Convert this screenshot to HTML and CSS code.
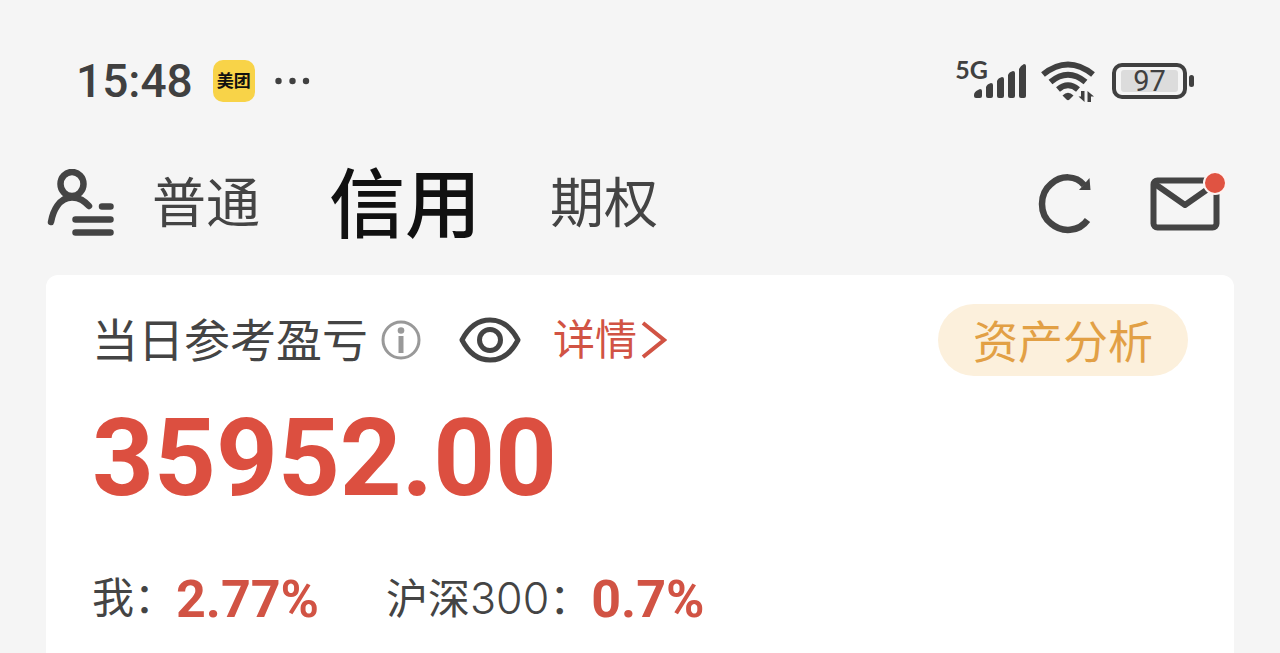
FILE: index.html
```html
<!DOCTYPE html>
<html lang="zh-CN">
<head>
<meta charset="utf-8">
<meta name="viewport" content="width=device-width, initial-scale=1">
<title>信用</title>
<link rel="stylesheet" href="styles.css">
</head>
<body>
<div class="status">
  <time class="clock">15:48</time>
  <span class="app-badge">美团</span>
  <svg class="dots" width="36" height="8" viewBox="0 0 36 8" fill="#404040" aria-hidden="true"><circle cx="3.500" cy="4" r="3.200"/><circle cx="17.500" cy="4" r="3.200"/><circle cx="31" cy="4" r="3.200"/></svg>
  <div class="status-right">
    <span class="network">5G</span>
    <svg class="signal" width="52" height="34" viewBox="0 0 52 34" fill="#404040" aria-hidden="true">
      <path d="M0 31Q0 28 4 26L6 25Q8 25 8 27V32Q8 34 6 34H2Q0 34 0 32Z"/>
      <path d="M12 23Q13 20 17 19Q19 19 19 21V32Q19 34 17 34H14Q12 34 12 32Z"/>
      <path d="M23 17Q24 14 28 13Q30 13 30 15V32Q30 34 28 34H25Q23 34 23 32Z"/>
      <path d="M34 11Q35 8 39 7Q41 7 41 9V32Q41 34 39 34H36Q34 34 34 32Z"/>
      <path d="M45 5Q46 2 50 0Q52 0 52 2V32Q52 34 50 34H47Q45 34 45 32Z"/>
    </svg>
    <svg class="wifi" width="54" height="42" viewBox="0 0 54 42" fill="none" stroke="#404040" stroke-width="6" aria-hidden="true">
      <path d="M2 14.500Q27-5.500 52 14.500M9.500 22Q27 7.500 44.500 22M17 29.500Q27 21 37 29.500"/>
      <path d="M21.500 35.500Q27 30 32.500 35.500L28.500 39.500Q27 41 25.500 39.500Z" fill="#404040" stroke="none"/>
      <path d="M43.500 31V42L37.500 36.500H40V31ZM46.500 42V31L53 36.500H50V42Z" fill="#404040" stroke="none"/>
    </svg>
    <div class="battery"><span class="battery-level">97</span></div>
  </div>
</div>

<header class="nav">
  <button class="icon-button profile" aria-label="账户">
    <svg width="68" height="70" viewBox="0 0 68 70" fill="none" stroke="#444" stroke-width="6.500" stroke-linecap="round" aria-hidden="true">
      <ellipse cx="25" cy="15" rx="11.500" ry="12"/>
      <path d="M4 53C6 42 12 28.500 25 28.500C33 28.500 37 32 42 37M55 37.500H63.500M28.500 50.500H63.500M28.500 63.500H63.500"/>
    </svg>
  </button>
  <nav class="tabs">
    <a class="tab" href="#normal">普通</a>
    <a class="tab tab-active" href="#credit" aria-current="page">信用</a>
    <a class="tab" href="#option">期权</a>
  </nav>
  <button class="icon-button refresh" aria-label="刷新">
    <svg width="56" height="60" viewBox="0 0 56 60" aria-hidden="true">
      <path d="M50.500 46C42 58 25 59 14 49.500C2 40 2 20 14 10C24 1 39 1 47 11" fill="none" stroke="#444" stroke-width="6.500"/>
      <path d="M52.500 4L53.500 16H42Z" fill="#444"/>
    </svg>
  </button>
  <button class="icon-button mail" aria-label="消息">
    <svg width="70" height="54" viewBox="0 0 70 54" fill="none" stroke="#444" stroke-width="6" aria-hidden="true">
      <rect x="3.500" y="3.500" width="63" height="47" rx="4"/>
      <path d="M5 7L35 28L65 7" stroke-linejoin="round"/>
    </svg>
    <span class="mail-dot"></span>
  </button>
</header>

<main class="card">
  <div class="heading">
    <h1 class="title">当日参考盈亏</h1>
    <button class="icon-button info" aria-label="说明">
      <svg width="40" height="40" viewBox="0 0 40 40" aria-hidden="true">
        <circle cx="20" cy="20" r="18" fill="none" stroke="#999" stroke-width="3"/>
        <circle cx="20" cy="10.500" r="3.300" fill="#999"/><path d="M17.500 16H22.500V33H17.500Z" fill="#999"/>
      </svg>
    </button>
    <button class="icon-button eye" aria-label="隐藏金额">
      <svg width="62" height="46" viewBox="0 0 62 46" fill="none" stroke="#444" stroke-width="5" aria-hidden="true">
        <path d="M3 23C10 9.500 19 3 31 3S52 9.500 59 23C52 36.500 43 43 31 43S10 36.500 3 23Z" stroke-linejoin="round"/>
        <circle cx="31" cy="23" r="10.500"/>
      </svg>
    </button>
    <a class="detail" href="#detail">详情<svg width="26" height="38" viewBox="0 0 26 38" fill="none" stroke="#d15344" stroke-width="4" aria-hidden="true"><path d="M2 2L23 19L2 36"/></svg></a>
    <button class="analysis">资产分析</button>
  </div>
  <p class="amount">35952.00</p>
  <dl class="rates">
    <div class="rate"><dt>我：</dt><dd>2.77%</dd></div>
    <div class="rate"><dt>沪深<span class="index-number">300</span>：</dt><dd>0.7%</dd></div>
  </dl>
</main>
</body>
</html>
```

FILE: styles.css
```css
* { box-sizing: border-box; }
body {
  margin: 0;
  min-height: 100vh;
  display: flex;
  flex-direction: column;
  background: #f5f5f5;
  color: #444;
  font-family: Inter, "Noto Sans CJK SC", sans-serif;
}
a { color: inherit; text-decoration: none; }
svg { display: block; flex: none; }
.icon-button { display: block; flex: none; padding: 0; border: 0; background: none; }

.status {
  display: flex;
  align-items: center;
  height: 106px;
  padding: 56px 86px 0 76px;
  color: #404040;
}
.clock { font: 500 46px/50px Roboto, sans-serif; }
.app-badge {
  display: grid;
  place-items: center;
  width: 42px;
  height: 42px;
  margin: 0 20px;
  border-radius: 10px;
  background: #f8d348;
  color: #111;
  font-size: 17px;
  line-height: 20px;
  font-weight: 700;
}
.status-right { display: flex; align-items: center; margin-left: auto; }
.network {
  align-self: flex-start;
  margin: -3px -14px 0 0;
  font: 700 25px/24px Lato, sans-serif;
}
.signal { margin-right: 15px; }
.wifi { margin-right: 17px; }
.battery {
  position: relative;
  width: 75px;
  height: 36px;
  margin-right: 7px;
  padding: 3px 5px;
  border: 4px solid #404040;
  border-radius: 10px;
}
.battery::after {
  content: "";
  position: absolute;
  top: 8px;
  right: -11px;
  width: 5px;
  height: 12px;
  border-radius: 3px;
  background: #404040;
}
.battery-level {
  display: block;
  border-radius: 3px;
  background: #dcdcdc;
  text-align: center;
  font: 400 29px/22px Roboto, sans-serif;
}

.nav {
  display: flex;
  align-items: center;
  height: 169px;
  padding: 27px 60px 0 47px;
}
.tabs { display: flex; align-items: center; gap: 69px; margin: 0 auto 0 37px; }
.tab { font-size: 54px; line-height: 80px; font-weight: 400; }
.tab-active { color: #111; font-size: 76px; font-weight: 500; }
.refresh { margin-right: 57px; }
.mail { position: relative; }
.mail-dot {
  position: absolute;
  top: -6px;
  right: -7px;
  width: 24px;
  height: 24px;
  border: 2px solid #fdf3f1;
  border-radius: 50%;
  background: #e05342;
}

.card {
  flex: 1;
  margin: 0 46px;
  padding: 29px 46px 0;
  border-radius: 12px 12px 0 0;
  background: #fff;
}
.heading { display: flex; align-items: center; height: 72px; }
.title { margin: 0; font-size: 46px; line-height: 72px; font-weight: 400; }
.info { margin-left: 13px; }
.eye { margin: 0 32px 0 38px; }
.detail { display: flex; align-items: center; gap: 4px; color: #d15344; font-size: 42px; line-height: 60px; }
.analysis {
  margin-left: auto;
  height: 72px;
  padding: 0 35px;
  border: 0;
  border-radius: 36px;
  background: #fcf0dc;
  color: #e2a045;
  font: 400 45px/70px "Noto Sans CJK SC", sans-serif;
}
.amount { margin: 22px 0 0; color: #dc4f40; font: 700 108px/120px Roboto, sans-serif; }
.rates { display: flex; gap: 67px; margin: 48px 0 0; }
.rate { display: flex; align-items: center; height: 64px; }
.rate dt { font-size: 42px; line-height: 60px; font-weight: 400; }
.index-number { font-size: 43px; font-weight: 300; }
.rate dd { margin: 0; padding-top: 4px; color: #d15344; font: 700 52px/60px Roboto, sans-serif; }
```
